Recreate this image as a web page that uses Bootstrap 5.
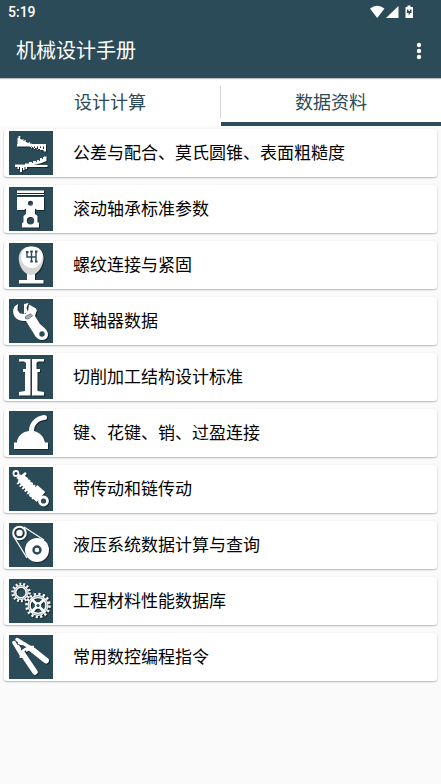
<!DOCTYPE html>
<html lang="zh-CN">
<head>
<meta charset="utf-8">
<meta name="viewport" content="width=device-width, initial-scale=1">
<title>机械设计手册</title>
<link href="https://cdn.jsdelivr.net/npm/bootstrap@5.3.0/dist/css/bootstrap.min.css" rel="stylesheet">
<style>
:root { --brand: #2b4b58; }
body { font-family: Roboto, "Noto Sans CJK SC", sans-serif; background: #fafafa; color: #000; }
.app-head { background: var(--brand); color: #fff; box-shadow: 0 1px 1px rgba(0,0,0,.25); }
.status { height: 24px; padding: 0 27px 0 8px; font-size: 14px; line-height: 24px; font-weight: 500; }
.app-bar { height: 54px; padding: 0 8px 0 16px; }
.app-bar h1 { font-size: 20px; line-height: 24px; font-weight: 400; }
.more { width: 28px; height: 40px; }
.tab-row { background: #fff; height: 48px; }
.tab-row .nav-link { height: 48px; padding: 5px 0 0; border-radius: 0; font-size: 18px; line-height: 40px; color: var(--brand); border-bottom: 4px solid transparent; }
.tab-row .nav-link.active { color: var(--brand); border-bottom-color: var(--brand); }
.tab-rule { width: 1px; height: 32px; background: #d5d5d5; }
.topics { padding: 3px 4px; gap: 8px; }
.topic { height: 48px; padding: 0 5px; gap: 20px; background: #fff; color: #000; border-radius: 3px; box-shadow: 0 1px 2px rgba(0,0,0,.28); font-size: 17px; line-height: 24px; }
.tile { width: 44px; height: 44px; background: var(--brand); }
.tile > g { filter: drop-shadow(1px 1px 0 rgba(0,0,0,.45)); }
</style>
<script src="https://cdn.jsdelivr.net/npm/bootstrap@5.3.0/dist/js/bootstrap.bundle.min.js" defer></script>
</head>
<body>
<header class="app-head position-relative">
  <div class="status d-flex align-items-center justify-content-between">
    <span>5:19</span>
    <svg width="44" height="14" viewBox="0 0 44 14" fill="#fff" aria-hidden="true">
      <path d="M0 3.500Q7-2 14.500 3.500L7.200 13Z"/>
      <path d="M28.500 1V13H16Z"/>
      <path d="M35.500 2h2V.500h3V2h2.500v11h-7.500z"/>
      <path d="M37 4.500h1.500v1.500h1.500V4.500h1.500V8h-1.500l-1 3-.5-3H37z" fill="#2b4b58"/>
    </svg>
  </div>
  <div class="app-bar d-flex align-items-center justify-content-between">
    <h1 class="m-0">机械设计手册</h1>
    <button class="more btn p-0 border-0 d-flex align-items-center justify-content-center" type="button" aria-label="更多">
      <svg width="6" height="18" viewBox="0 0 6 18" fill="#fff"><circle cx="3" cy="3" r="2.200"/><circle cx="3" cy="9" r="2.200"/><circle cx="3" cy="15" r="2.200"/></svg>
    </button>
  </div>
</header>
<nav class="tab-row d-flex align-items-center text-center">
  <a class="nav-link flex-fill w-50" href="#calc">设计计算</a>
  <span class="tab-rule flex-shrink-0"></span>
  <a class="nav-link active flex-fill w-50" href="#data" aria-current="page">数据资料</a>
</nav>
<main class="topics d-flex flex-column" id="data">
  <a class="topic d-flex align-items-center text-decoration-none" href="#t1">
    <svg class="tile flex-shrink-0" viewBox="0 0 44 44"><g fill="#fff">
      <path d="M8 13H37V15.500H8z"/>
      <path d="M8.500 14V7h1V5h1.800v3H12.500v1h1v-1h1v2h1v-1h1.200v2h1.500v1h1.500v-1h1v1.500h2V14z"/>
      <path d="M20 15h2v2h1V15h2v3h1V15h2v3.500h1V15h2v4h1V15h2v4.500h1V15h2v5.500h-2V18h-1v1h-2v-2h-1v1z"/>
      <path d="M6 33.500L38.500 34V36H6z"/>
      <path d="M7 35h1.500v3H10v-2h1v5h2v-4h1v2h1.500v-3h1v2H18v-3z"/>
      <path d="M16 34v-1.500h4V31h3v1h1v-2h3v1h1v-2h2v1h1v-3h2v1h1v-2h1.500v1H35v-1.500h2.500V30l-5 2-8 2z"/>
    </g></svg><span>公差与配合、莫氏圆锥、表面粗糙度</span></a>
  <a class="topic d-flex align-items-center text-decoration-none" href="#t2">
    <svg class="tile flex-shrink-0" viewBox="0 0 44 44"><g fill="#fff" fill-rule="evenodd">
      <path d="M8 3.500H35V6H8zM8 7H35V8H8zM8 10H35V23H28L26 21.500V27L28.500 29V35.500H30V40.500H13V36.500L14.500 35V29L17 27V21.500L15 23H8zM21.500 13.800a2.500 2.500 0 1 0 0 5 2.500 2.500 0 1 0 0-5zM21.500 30a3.700 3.700 0 1 0 0 7.400 3.700 3.700 0 1 0 0-7.400z"/>
    </g></svg><span>滚动轴承标准参数</span></a>
  <a class="topic d-flex align-items-center text-decoration-none" href="#t3">
    <svg class="tile flex-shrink-0" viewBox="0 0 44 44"><g>
      <path d="M18 30H26V37H34.500V40.500H10V37H18z" fill="#fff"/>
      <path d="M22 3.500C30 3.500 35 9 34.500 16C34 23 29 32 22 32S10 23 9.800 16C9.500 9 14 3.500 22 3.500z" fill="#d6d6d6"/>
      <path d="M22.500 3.500C30 3.500 34 8 33.500 14C33 20 29 25 23 25S12 20 12 14S15 3.500 22.500 3.500z" fill="#fff"/>
      <path d="M18 9v5h9M22.500 8v11M27 8v11" fill="none" stroke="#2b4b58" stroke-width="1.400"/>
      <path d="M17 8h2.500v2H17zM21.300 7.500h2.500v2h-2.500zM26 7.500h2.500v2H26zM21.300 17.500h2.500v2h-2.500zM26 17.500h2.500v2H26z" fill="#2b4b58"/>
    </g></svg><span>螺纹连接与紧固</span></a>
  <a class="topic d-flex align-items-center text-decoration-none" href="#t4">
    <svg class="tile flex-shrink-0" viewBox="0 0 44 44"><g>
      <path d="M9 5L5.500 7.500C3 12 4 17 8 20C11 22 14 22 17 22L25 35C27 39 30 41 33.500 41C38 41 40 37 38.500 33C37.500 30 34 28 31 25L26 17L27.500 12L19 12L16.500 15L11 14.500L8.500 11z" fill="#fff"/>
      <path d="M15 5L19.500 4L17.500 9L19 13L15 15z" fill="#fff"/>
      <path d="M20 5.500L27 9.500L28 12L24 15L19 12.500z" fill="#fff"/>
      <path d="M16.500 17.500l5-2.700 2 2-4.500 3.200-2.500-.5z" fill="#a9b1b4" stroke="#53666e" stroke-width=".8"/>
      <circle cx="33" cy="35" r="2.700" fill="#2b4b58"/>
    </g></svg><span>联轴器数据</span></a>
  <a class="topic d-flex align-items-center text-decoration-none" href="#t5">
    <svg class="tile flex-shrink-0" viewBox="0 0 44 44"><g fill="#fff">
      <path d="M10 4H21.500V40.500H10V37L16 36V17H14V14H17V8L15 6.500H10z"/>
      <path d="M23 4H35V6.500H29L27.500 8V14H31V17H28.500V36L35 37V40.500H23z"/>
    </g></svg><span>切削加工结构设计标准</span></a>
  <a class="topic d-flex align-items-center text-decoration-none" href="#t6">
    <svg class="tile flex-shrink-0" viewBox="0 0 44 44"><g fill="#fff">
      <path d="M5 31.500H8C8 26 13 20.500 20 20C20 12 26 5 35 4Q38 4 38 6.500Q38 9 35 9C29 10 25 14 25 20C31 21.500 35 26 36 31.500H39V38H5z"/>
    </g></svg><span>键、花键、销、过盈连接</span></a>
  <a class="topic d-flex align-items-center text-decoration-none" href="#t7">
    <svg class="tile flex-shrink-0" viewBox="0 0 44 44"><g fill="none" stroke="#fff">
      <circle cx="7" cy="6.500" r="2.500" stroke-width="1.800"/>
      <path d="M9 9L15 14" stroke-width="5"/>
      <path d="M12 10l5-4M10 14l3-2" stroke-width="2.500"/>
      <path d="M12 11L28 28" stroke-width="9"/>
      <path d="M14 9L31 26" stroke-width="4" stroke-dasharray="2 1.500"/>
      <path d="M9 15L26 32" stroke-width="4" stroke-dasharray="2 1.500"/>
      <path d="M24 23L32 30" stroke-width="13"/>
      <circle cx="34.500" cy="34" r="4" stroke-width="2.800" fill="#2b4b58"/>
    </g></svg><span>带传动和链传动</span></a>
  <a class="topic d-flex align-items-center text-decoration-none" href="#t8">
    <svg class="tile flex-shrink-0" viewBox="0 0 44 44"><g fill="none" stroke="#fff">
      <path d="M15 4L35 17M4.500 13L18 35" stroke-width="1.400"/>
      <circle cx="10.500" cy="10" r="6.300" stroke-width="2"/>
      <circle cx="10.500" cy="10" r="3.200" fill="#fff" stroke="none"/>
      <circle cx="28" cy="27" r="12" fill="#fff" stroke="none"/>
      <circle cx="28" cy="27" r="3.500" fill="#fff" stroke="#2b4b58" stroke-width="2.400"/>
    </g></svg><span>液压系统数据计算与查询</span></a>
  <a class="topic d-flex align-items-center text-decoration-none" href="#t9">
    <svg class="tile flex-shrink-0" viewBox="0 0 44 44"><g fill="none" stroke="#fff">
      <circle cx="12" cy="13.500" r="8.500" stroke-width="2.600" stroke-dasharray="1.900 1.920"/>
      <circle cx="12" cy="13.500" r="6" stroke-width="3"/>
      <circle cx="12" cy="13.500" r="6.300" stroke="#2b4b58" stroke-width=".4"/>
      <circle cx="29" cy="26.500" r="11.500" stroke-width="2.600" stroke-dasharray="2.200 2.316"/>
      <circle cx="29" cy="26.500" r="8.800" stroke-width="3.200"/>
      <circle cx="29" cy="26.500" r="9" stroke="#2b4b58" stroke-width=".5"/>
      <path d="M22.500 20L35.500 33M35.500 20L22.500 33" stroke-width="2.600"/>
      <circle cx="29" cy="26.500" r="3.200" fill="#fff" stroke="none"/>
      <circle cx="29" cy="26.500" r="1.600" fill="#2b4b58" stroke="none"/>
    </g></svg><span>工程材料性能数据库</span></a>
  <a class="topic d-flex align-items-center text-decoration-none" href="#t10">
    <svg class="tile flex-shrink-0" viewBox="0 0 44 44"><g fill="none" stroke="#fff" stroke-linecap="round">
      <path d="M8 4.500L22 13" stroke-width="3.500"/>
      <path d="M5 7.500L13 21" stroke-width="3.500"/>
      <path d="M10 8l3 1M9 11l2 3M15 15l5-3" stroke-width="2.500"/>
      <path d="M22.500 14L37 25.500" stroke-width="6"/>
      <path d="M14.500 20L26 37" stroke-width="5.500"/>
      <path d="M13 17L19 14" stroke-width="4"/>
      <path d="M24 11.500l-1 2M11.500 22l2-2" stroke-width="2"/>
      <circle cx="16.500" cy="16.500" r="1" fill="#2b4b58" stroke="none"/>
    </g></svg><span>常用数控编程指令</span></a>
</main>
</body>
</html>
